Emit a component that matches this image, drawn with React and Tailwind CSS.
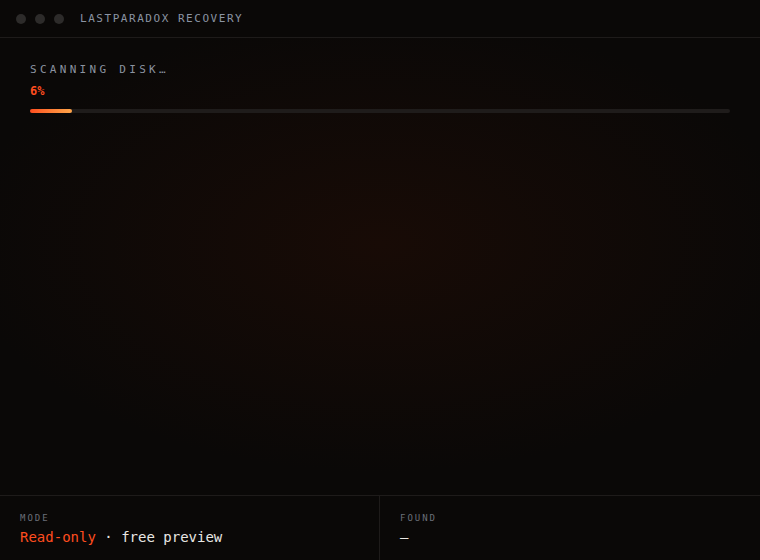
export default function App() {
  const progress = 6;
  return (
    <div
      className="flex h-[560px] w-[760px] flex-col overflow-hidden bg-[#0a0807] text-[#e8e6e3]"
      style={{ fontFamily: '"DejaVu Sans Mono", "Liberation Mono", monospace' }}
    >
      <header className="flex h-[38px] shrink-0 items-center border-b border-[#1e1b1a] px-4 pt-[1px]">
        <div className="flex items-center gap-[9px]">
          <span className="h-[10px] w-[10px] rounded-full bg-[#2d2b2a]" />
          <span className="h-[10px] w-[10px] rounded-full bg-[#2d2b2a]" />
          <span className="h-[10px] w-[10px] rounded-full bg-[#2d2b2a]" />
        </div>
        <h1 className="ml-[16px] text-[11px] tracking-[0.14em] text-[#8b94a3]">LASTPARADOX RECOVERY</h1>
      </header>

      <main className="flex-1 bg-[radial-gradient(ellipse_55%_50%_at_50%_45%,#180b06_0%,#0a0807_100%)] px-[30px] pt-[25px]">
        <p className="text-[11px] leading-[14px] tracking-[0.3em] text-[#8b93a0]">SCANNING DISK…</p>
        <p className="mt-[7px] text-[12px] font-bold leading-[15px] text-[#ff4d1f]">{progress}%</p>
        <div className="mt-[10px] h-[4px] w-full rounded-full bg-[#1f1c1b]">
          <div
            className="h-full rounded-full bg-gradient-to-r from-[#ff4d1f] to-[#ffa54a]"
            style={{ width: `${progress}%` }}
          />
        </div>
      </main>

      <footer className="grid h-[65px] shrink-0 grid-cols-2 border-t border-[#1e1b1a]">
        <div className="border-r border-[#1e1b1a] px-5 pt-[16px]">
          <p className="text-[9px] leading-[12px] tracking-[0.22em] text-[#6b6f78]">MODE</p>
          <p className="mt-[4px] text-[14px] leading-[18px]">
            <span className="text-[#ff4d1f]">Read-only</span>
            <span className="text-[#e8e6e3]"> · free preview</span>
          </p>
        </div>
        <div className="px-5 pt-[16px]">
          <p className="text-[9px] leading-[12px] tracking-[0.22em] text-[#6b6f78]">FOUND</p>
          <p className="mt-[4px] text-[14px] leading-[18px] text-[#e8e6e3]">—</p>
        </div>
      </footer>
    </div>
  );
}
